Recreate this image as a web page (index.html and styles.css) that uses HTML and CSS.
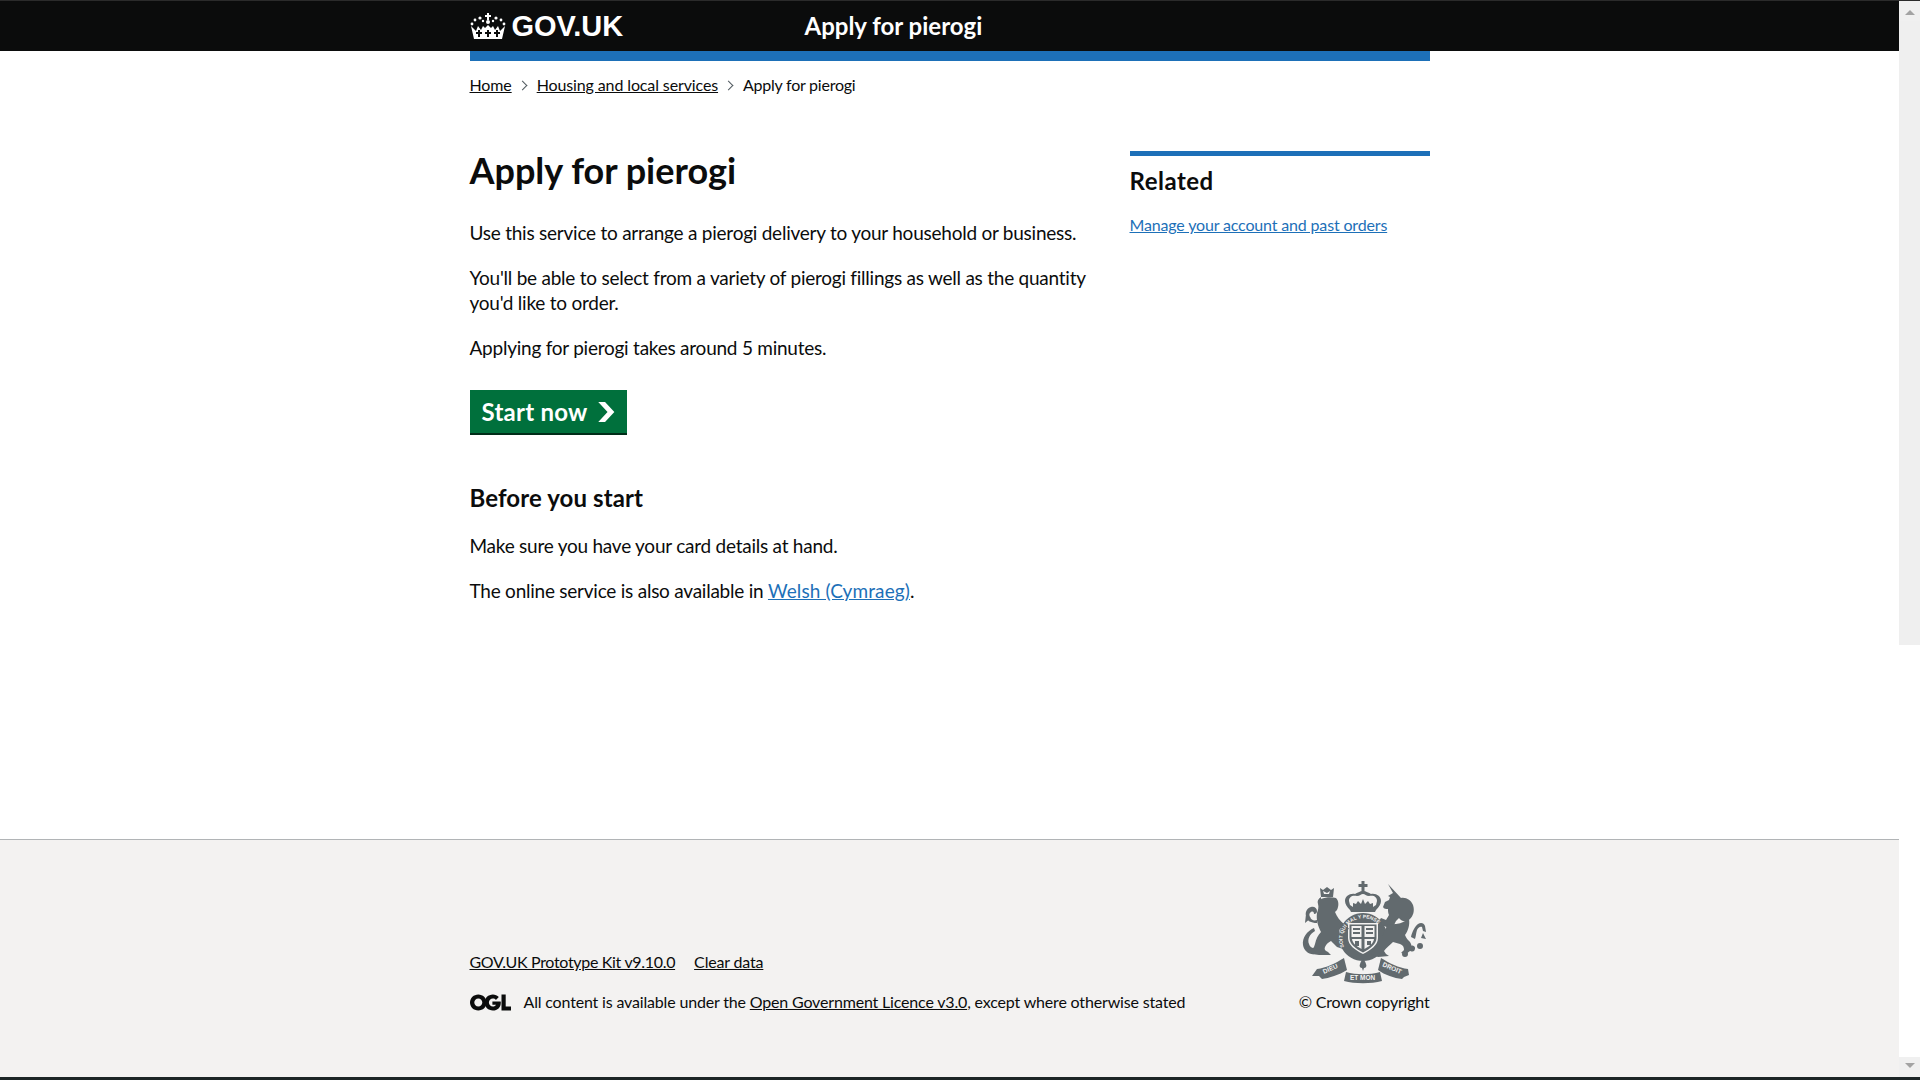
FILE: index.html
```html
<!DOCTYPE html>
<html lang="en">
<head>
    <meta charset="UTF-8">
    <title>Apply for pierogi</title>
    <link rel="stylesheet" href="styles.css">
</head>
<body>

<div class="top-line"></div>

<div class="window">
    <div class="page">
        <div class="header">
            <div class="header-inner">
                <a class="logo" href="#">
                    <svg class="crown" viewBox="0 0 36 28" aria-hidden="true">
                        <g fill="#fff">
                            <path d="M17 1h2v2h2v2h-2v3h-2V5h-2V3h2z"/>
                            <circle cx="18" cy="10" r="2"/>
                            <circle cx="10" cy="6" r="1.6"/>
                            <circle cx="26" cy="6" r="1.6"/>
                            <circle cx="5" cy="8" r="1.4"/>
                            <circle cx="31" cy="8" r="1.4"/>
                            <circle cx="2" cy="12" r="1.4"/>
                            <circle cx="34" cy="12" r="1.4"/>
                            <circle cx="13" cy="9" r="1.2"/>
                            <circle cx="23" cy="9" r="1.2"/>
                            <path d="M1 14l3 13h28l3-13-5 5-2-5-3 4-2-4-2 2-3-3-3 3-2-2-2 4-3-4-2 5z"/>
                        </g>
                        <g fill="#0b0c0c">
                            <path d="M8 18h2v2h2v2h-2v3H8v-3H6v-2h2zM17 18h2v2h2v2h-2v3h-2v-3h-2v-2h2zM26 18h2v2h2v2h-2v3h-2v-3h-2v-2h2z"/>
                        </g>
                    </svg>
                    <span>GOV.UK</span>
                </a>
                <a class="service-name" href="#">Apply for pierogi</a>
            </div>
        </div>

        <div class="width-container">
            <div class="header-rule"></div>

            <div class="breadcrumbs">
                <a href="#">Home</a>
                <span class="crumb-arrow"></span>
                <a href="#">Housing and local services</a>
                <span class="crumb-arrow"></span>
                <span class="crumb-current">Apply for pierogi</span>
            </div>

            <div class="columns">
                <div class="main-col">
                    <h1>Apply for pierogi</h1>
                    <p>Use this service to arrange a pierogi delivery to your household or business.</p>
                    <p>You'll be able to select from a variety of pierogi fillings as well as the quantity you'd like to order.</p>
                    <p>Applying for pierogi takes around 5 minutes.</p>

                    <a class="start-btn" href="#">
                        Start now
                        <svg class="start-arrow" viewBox="0 0 33 40" aria-hidden="true">
                            <path fill="#fff" d="M0 0h13.6l18.6 19.9L13.6 40H0l18.6-20.1z"/>
                        </svg>
                    </a>

                    <h2>Before you start</h2>
                    <p>Make sure you have your card details at hand.</p>
                    <p>The online service is also available in <a class="blue" href="#">Welsh (Cymraeg)</a>.</p>
                </div>

                <div class="side-col">
                    <h2>Related</h2>
                    <a class="blue small" href="#">Manage your account and past orders</a>
                </div>
            </div>
        </div>

        <div class="footer">
            <div class="footer-inner">
                <div class="footer-left">
                    <div class="footer-links">
                        <a class="kit-link" href="#">GOV.UK Prototype Kit v9.10.0</a>
                        <a href="#">Clear data</a>
                    </div>
                    <div class="licence">
                        <svg class="ogl" viewBox="0 0 41 17" aria-hidden="true">
                            <path fill="#0b0c0c" d="M8.3 0.6C3.7 0.6 0 4.2 0 8.6s3.700 8 8.300 8 8.300-3.600 8.300-8-3.700-8-8.300-8zm0 4c2.300 0 4 1.800 4 4s-1.700 4-4 4-4-1.800-4-4 1.700-4 4-4z"/>
                            <path fill="#0b0c0c" d="M31.500 0.600h4.200v12h5.300v4h-9.500zM30.600 7.600h-8.200v3.200h3.600c-.5 1.100-1.600 1.800-3.100 1.800-2.300 0-4-1.800-4-4s1.700-4 4-4c1.200 0 2.300.5 3 1.300l2.900-2.800C27.300 1.600 25.100.6 22.900.6c-4.600 0-8.300 3.600-8.300 8s3.700 8 8.300 8 7.900-3.400 7.900-7.900c0-.4 0-.8-.2-1.100z"/>
                        </svg>
                        <span>All content is available under the <a href="#">Open Government Licence v3.0</a>, except where otherwise stated</span>
                    </div>
                </div>
                <div class="footer-right">
                    <svg class="crest" viewBox="0 0 135 110" aria-hidden="true">
                        <defs>
                            <path id="garter" d="M49 71A21 21 0 1 1 88 71"/>
                        </defs>
                        <g fill="#626a6e">
                            <!-- crown -->
                            <path d="M66.500 5h3v3h3v3h-3v5h-3v-5h-3V8h3z"/>
                            <path fill-rule="evenodd" d="M68 15c-3 0-6 2-8 3-5-1-10 2-10 7 0 3 2 6 5 9l1 2h24l1-2c3-3 5-6 5-9 0-5-5-8-10-7-2-1-5-3-8-3zm0 3c2 0 3 2 6 2 5-1 8 1 8 5l-1 4-3 2v-4l-3 1-2-3-3 3-2-5-2 5-3-3-2 3-3-1v4l-3-2-1-4c0-4 3-6 8-5 3 0 4-2 6-2z"/>
                            <!-- garter ring and shield -->
                            <path fill-rule="evenodd" d="M68 37a24 24 0 1 0 .1 0zm-15 10h30v15c0 7-7 12-15 16-8-4-15-9-15-16z"/>
                            <path fill-rule="evenodd" d="M54.500 48.500h27V62c0 6-6 10.500-13.500 14.500C60.500 72.500 54.500 68 54.500 62zm2 1.500v11h10V50zm13 0v11h10V50zM57 63c.5 4 4 7 9.500 10V63zm12.500 0v10c5.500-3 9-6 9.500-10z"/>
                            <path d="M58 52h7v2h-7zM58 56h7v2h-7zM71 52h7v2h-7zM71 56h7v2h-7zM60 65h4v5h-4zM72 65h4v4h-4z"/>
                            <!-- lion -->
                            <path fill-rule="evenodd" d="M25 12l3 2 4-3 4 3 3-2-1 9H26zm3 3l1 3h5l1-3-3 2z"/>
                            <path d="M26 23c5-2 11-2 15-1 3 3 3 8 1 12l-2 2c2 5 5 9 9 12 2 2 4 3 5 5l-4 1c-1-1-2-1-4-2-2 1-2 4-1 7 1 4 5 6 7 9l4 5-5 2-3-2-6-2-6-6c-2 1-5 3-6 6-1 2 0 4 3 5l3 3H24l-7-1-3-3c3-1 5-3 6-7 1-5 3-9 6-12-3-6-5-12-4-19 1-3 2-6 1-9-1-3 0-5 3-7z"/>
                            <path d="M22 47c-6 0-10-2-11-7-1-4 1-8 5-9 3-1 6 1 6 4 0 2-1 3-3 3 0-2-1-3-3-2-2 1-2 3-1 5 1 3 4 4 7 3zM10 47l1-9 5 4zM20 55c-5 3-8 8-6 13 1 4 5 5 8 4l-2 6c-6 1-11-3-12-9-1-7 4-14 11-17z"/>
                            <!-- unicorn -->
                            <path d="M93 8l13 14c5-1 10 2 12 7 2 6 0 11-3 14l-4 3c-3-1-6-2-7-4l-3 3-3 6-4 1-5-2c-2-3-5-5-5-5l2-3 5 2 3-5c-1-2-1-4-1-6-2 0-4 0-5-2l2-5 4-2 1-3-2-1 5-3z"/>
                            <path d="M93 48c6 1 13 0 21-5 1 6-1 12-4 16 1 3 3 5 5 7 2 3 2 6 0 9l-4 3-5-1 3-3c0-3-1-5-4-6l-7-2c-3 3-7 6-9 9l2 3 3 2-11 1-7-3c3-5 7-9 11-13 0-4 1-8 6-17z"/>
                            <path d="M116 61c1-5 4-11 7-13 3-2 6-1 7 2l1 6-3-1-1-4c-2-1-4 1-5 3-1 3-1 6-2 9zM128 57l3 6-5-1zM114 72a3 3 0 1 1 6 1 3 3 0 1 1-6-1zM122 70a3 3 0 1 1 6 0 3 3 0 1 1-6 0zM107 78a3 3 0 1 1 6 0 3 3 0 1 1-6 0z"/>
                            <!-- motto -->
                            <path d="M22 93c9-1 19-6 27-11l3 12c-8 5-18 8-25 9l-3-3-7 0z"/>
                            <path d="M86 82c8 5 18 10 27 11l1 6 -5 2-2 2c-8-1-17-4-24-9z"/>
                            <path d="M51 96c10 3 24 3 34 0l2 9c-11 3-27 3-38 0z"/>
                            <path d="M65 88c1-3 2-4 3-6 1 2 2 3 3 6 1 2 0 4-2 4l-1 3-1-3c-2 0-3-2-2-4z"/>
                        </g>
                        <g fill="#f3f2f1" class="crest-text">
                            <text font-size="5"><textPath href="#garter">SOIT QUI MAL Y PENSE</textPath></text>
                            <text font-size="6.500" transform="translate(29 98) rotate(-24)">DIEU</text>
                            <text font-size="6.500" x="55" y="104">ET MON</text>
                            <text font-size="6.500" transform="translate(87 90) rotate(24)">DROIT</text>
                        </g>
                    </svg>
                    <span class="copyright">© Crown copyright</span>
                </div>
            </div>
        </div>
    </div>

    <div class="scrollbar">
        <span class="scroll-up"></span>
        <div class="scroll-thumb"></div>
        <div class="scroll-track"></div>
        <span class="scroll-down"></span>
    </div>
</div>

<div class="bottom-line"></div>

</body>
</html>
```

FILE: styles.css
```css
body {
    font-family: "Lato", "Liberation Sans", sans-serif;
    color: #0b0c0c;
    background: #fff;
    margin: 0;
    padding: 0;
    height: 1080px;
    overflow: hidden;
}

a {
    color: #0b0c0c;
}

.top-line {
    height: 1px;
    background: #2b2b2b;
}

.bottom-line {
    height: 3px;
    background: #1c2526;
}

.window {
    height: 1076px;
    display: flex;
}

.page {
    width: 1899px;
    display: flex;
    flex-direction: column;
}

/* 상단 */
.header {
    height: 50px;
    background: #0b0c0c;
}

.header-inner {
    width: 960px;
    height: 50px;
    margin: 0 auto;
    display: flex;
    align-items: center;
}

.logo {
    width: 335px;
    display: flex;
    align-items: center;
    gap: 6px;
    color: #fff;
    text-decoration: none;
    font-size: 29px;
    font-weight: 700;
    font-family: "Liberation Sans", sans-serif;
}

.crown {
    width: 36px;
    height: 28px;
}

.service-name {
    color: #fff;
    text-decoration: none;
    font-size: 24px;
    font-weight: 700;
    margin-bottom: 2px;
}

.width-container {
    width: 960px;
    margin: 0 auto;
    flex: 1;
}

.header-rule {
    height: 10px;
    background: #1d70b8;
}

.breadcrumbs {
    margin-top: 14px;
    font-size: 16px;
    line-height: 20px;
    letter-spacing: -0.12px;
    display: flex;
    align-items: center;
}

.crumb-current {
    letter-spacing: -0.24px;
}

.crumb-arrow {
    width: 6px;
    height: 6px;
    margin: 0 11px 0 7px;
    border-top: 1px solid #505a5f;
    border-right: 1px solid #505a5f;
    transform: rotate(45deg);
}

.columns {
    display: flex;
    margin-top: 56px;
    gap: 40px;
}

.main-col {
    width: 620px;
}

.side-col {
    width: 300px;
    border-top: 5px solid #1d70b8;
    padding-top: 10px;
    align-self: flex-start;
}

h1 {
    font-size: 36px;
    line-height: 38px;
    margin: 0 0 31px;
    font-weight: 700;
}

h2 {
    font-size: 24px;
    line-height: 30px;
    margin: 0 0 20px;
    font-weight: 700;
    letter-spacing: 0.1px;
}

p {
    font-size: 19px;
    line-height: 25px;
    letter-spacing: -0.24px;
    margin: 0 0 20px;
}

p .blue {
    letter-spacing: 0.1px;
}

.blue {
    color: #1d70b8;
}

.small {
    font-size: 16px;
    letter-spacing: -0.16px;
}

.side-col h2 {
    margin-bottom: 19px;
    letter-spacing: 0.5px;
}

.start-btn {
    display: inline-flex;
    align-items: center;
    justify-content: space-between;
    box-sizing: border-box;
    width: 157px;
    height: 43px;
    padding: 0 12px;
    margin: 10px 0 50px;
    background: #00703c;
    box-shadow: 0 2px 0 #002d18;
    color: #fff;
    font-size: 24px;
    font-weight: 700;
    letter-spacing: 0.25px;
    text-decoration: none;
}

.start-arrow {
    width: 17px;
    height: 20px;
}

/* 하단 */
.footer {
    height: 237px;
    background: #f3f2f1;
    border-top: 1px solid #b1b4b6;
}

.footer-inner {
    width: 960px;
    margin: 0 auto;
    display: flex;
    justify-content: space-between;
    align-items: flex-end;
    padding-top: 36px;
}

.footer-left {
    font-size: 16px;
    line-height: 20px;
    letter-spacing: -0.17px;
}

.footer-links {
    display: flex;
    gap: 19px;
    margin-bottom: 20px;
}

.kit-link {
    letter-spacing: -0.32px;
}

.licence {
    display: flex;
    align-items: center;
    gap: 13px;
}

.ogl {
    width: 41px;
    height: 17px;
}

.footer-right {
    display: flex;
    flex-direction: column;
    align-items: flex-end;
    font-size: 16px;
    line-height: 20px;
    letter-spacing: -0.2px;
}

.crest {
    width: 135px;
    height: 110px;
    margin-bottom: 6px;
}

.crest-text {
    font-family: "Liberation Sans", sans-serif;
    font-weight: 700;
    letter-spacing: 0;
}

.scrollbar {
    width: 21px;
    display: flex;
    flex-direction: column;
    background: #f0f0f0;
}

.scroll-thumb {
    height: 624px;
    background: #efefef;
}

.scroll-track {
    flex: 1;
    background: #fff;
}

.scroll-up, .scroll-down {
    height: 20px;
    background: #f0f0f0;
    position: relative;
}

.scroll-up::after, .scroll-down::after {
    content: "";
    position: absolute;
    left: 6px;
    border-left: 5px solid transparent;
    border-right: 5px solid transparent;
}

.scroll-up::after {
    top: 9px;
    border-bottom: 5px solid #a3a3a3;
}

.scroll-down::after {
    top: 6px;
    border-top: 5px solid #a3a3a3;
}
```
